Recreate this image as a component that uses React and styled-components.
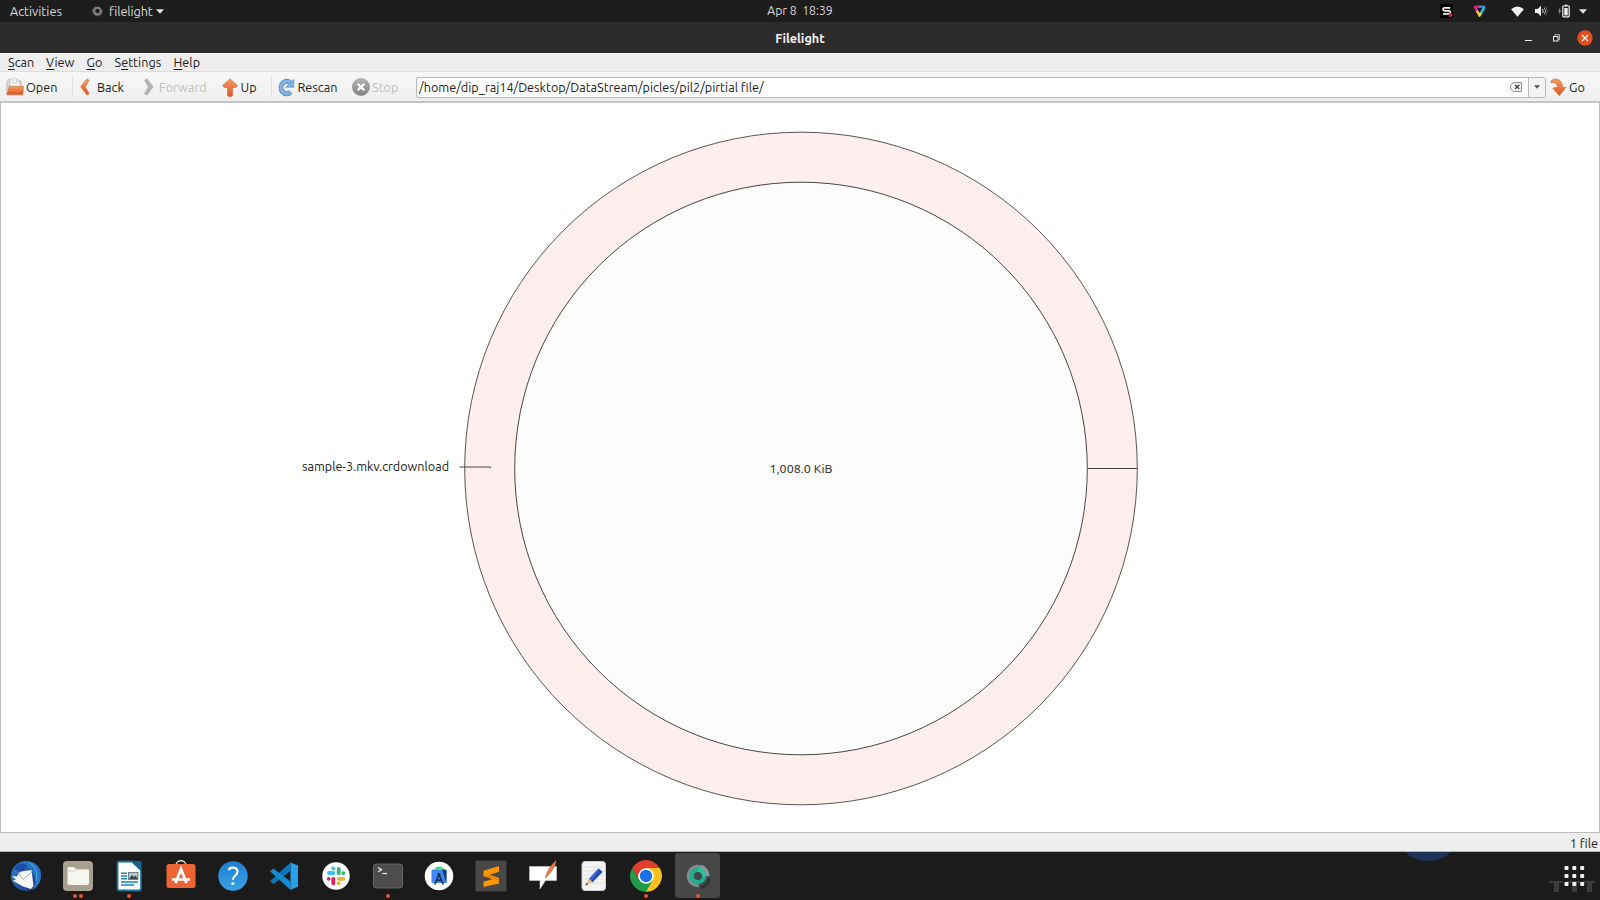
import React from "react";
import styled, { createGlobalStyle } from "styled-components";

const Global = createGlobalStyle`
  * { box-sizing: border-box; }
  body { margin: 0; background: #1b1b1b; overflow: hidden; }
  svg { display: block; flex: none; }
`;

const Desktop = styled.div`
  width: 1600px;
  height: 900px;
  display: flex;
  flex-direction: column;
  font-family: Ubuntu, "Noto Sans", sans-serif;
  font-size: 12.67px;
  color: #1c1c1c;
  white-space: pre;
`;

const Text = styled.span`
  font-size: ${(p) => p.$size || 12.67}px;
  letter-spacing: ${(p) => p.$ls || 0}px;
  line-height: 16px;
`;

/* GNOME top panel */
const Panel = styled.header`
  height: 22px;
  flex: none;
  display: grid;
  grid-template-columns: 1fr auto 1fr;
  align-items: center;
  background: #1d1d1d;
  color: #d9d9d9;
`;
const PanelLeft = styled.div`
  display: flex;
  align-items: center;
  padding-left: 10px;
`;
const Activities = styled.div`
  display: flex;
  width: 82px;
`;
const AppMenu = styled.div`
  display: flex;
  align-items: center;
`;
const AppName = styled.div`
  display: flex;
  width: 47px;
  margin-left: 6px;
`;
const Tray = styled.div`
  display: flex;
  justify-content: flex-end;
  align-items: center;
  padding-right: 13px;
`;
const TrayItem = styled.div`
  margin-left: ${(p) => p.$gap}px;
`;

/* window decoration */
const TitleBar = styled.div`
  height: 31px;
  flex: none;
  display: grid;
  grid-template-columns: 1fr auto 1fr;
  align-items: center;
  background: #2c2c2c;
  color: #f2f2f2;
  font-weight: 700;
`;
const WindowControls = styled.div`
  grid-column: 3;
  display: flex;
  justify-content: flex-end;
  align-items: center;
  padding-right: 7px;
`;
const Title = styled.div`
  grid-column: 2;
  display: flex;
`;
const ControlButton = styled.div`
  margin-left: ${(p) => p.$gap || 0}px;
`;

const MenuBar = styled.nav`
  height: 19px;
  flex: none;
  display: flex;
  align-items: center;
  padding: 0 0 1px 8px;
  background: #eeeeee;
  border-top: 1px solid #f8f8f8;
  border-bottom: 1px solid #dedede;
`;
const MenuItem = styled.div`
  display: flex;
  width: ${(p) => p.$w}px;
  u { text-decoration-thickness: 1px; text-underline-offset: 2px; }
`;

const ToolBar = styled.div`
  height: 31px;
  flex: none;
  display: flex;
  align-items: center;
  padding-top: 1px;
  background: linear-gradient(#f8f8f8, #eeeeee);
  border-bottom: 2px solid #c4c4c4;
`;
const ToolButton = styled.div`
  display: flex;
  align-items: center;
  flex: none;
  width: ${(p) => p.$w}px;
  padding-left: ${(p) => p.$pad}px;
  color: ${(p) => (p.$off ? "#c0c0c0" : "#1c1c1c")};
`;
const IconSlot = styled.div`
  width: ${(p) => p.$w}px;
  flex: none;
`;
const Separator = styled.div`
  width: 1px;
  height: 20px;
  background: #dfdfdf;
`;
const LocationBox = styled.div`
  flex: 1;
  height: 21px;
  display: flex;
  align-items: center;
  padding-left: 2px;
  background: #fff;
  border: 1px solid #b9b9b9;
  border-radius: 2px;
`;
const Path = styled.div`
  flex: 1;
  display: flex;
`;
const DropButton = styled.div`
  width: 17px;
  height: 19px;
  margin-left: 6px;
  display: flex;
  align-items: center;
  justify-content: center;
  background: #f3f3f3;
  border-left: 1px solid #b9b9b9;
`;

const MapArea = styled.main`
  flex: 1;
  min-height: 0;
  background: #fff;
  border: solid #bdbdbd;
  border-width: 0 1px 1px 1px;
  overflow: hidden;
`;

const StatusBar = styled.div`
  height: 18px;
  flex: none;
  display: flex;
  align-items: center;
  justify-content: flex-end;
  padding: 1px 2px 0 0;
  background: #eeeeee;
`;

const Dock = styled.footer`
  height: 49px;
  flex: none;
  display: flex;
  justify-content: space-between;
  border-top: 1px solid #aeb2b3;
  background: #1b1b1b;
`;
const DockApps = styled.div`
  display: flex;
  padding: 1px 0 0 3px;
  gap: 6.67px;
`;
const DockItem = styled.div`
  width: 45px;
  height: 45px;
  display: flex;
  flex-direction: column;
  align-items: center;
  padding: 7px 0 0 1px;
  border-radius: 3px;
  background: ${(p) => (p.$active ? "#474747" : "transparent")};
`;
const Dots = styled.div`
  display: flex;
  gap: 2px;
  margin-top: 2px;
`;
const Dot = styled.i`
  width: 4px;
  height: 4px;
  border-radius: 50%;
  background: #e9542a;
`;

const Caret = ({ w = 8, h = 5, fill = "#e4e4e4" }) => (
  <svg width={w} height={h} viewBox="0 0 8 5"><path d="M0 .3h8L4 4.8z" fill={fill} /></svg>
);

const Gradients = () => (
  <svg width="0" height="0" style={{ position: "absolute" }}>
    <defs>
      <linearGradient id="or" x1="0" y1="0" x2="0" y2="1"><stop offset="0" stopColor="#efa060" /><stop offset="1" stopColor="#df5424" /></linearGradient>
      <linearGradient id="gy" x1="0" y1="0" x2="0" y2="1"><stop offset="0" stopColor="#b5b5b5" /><stop offset="1" stopColor="#828282" /></linearGradient>
      <linearGradient id="bl" x1="0" y1="0" x2="1" y2="1"><stop offset="0" stopColor="#2b8ad8" /><stop offset="1" stopColor="#1c2f7c" /></linearGradient>
      <linearGradient id="hp" x1="0" y1="0" x2="0" y2="1"><stop offset="0" stopColor="#1d7fd0" /><stop offset="1" stopColor="#39a3e6" /></linearGradient>
    </defs>
  </svg>
);

const OpenIcon = () => (
  <svg width="18" height="18" viewBox="0 0 18 18">
    <path d="M.8 16V3.5L3 1.4h5l1 1.6h6V13z" fill="#d8d8d5" stroke="#aaa9a5" strokeWidth=".7" />
    <path d="M4 9V.9h6.5L14 3.4V9z" fill="#f8f8f8" stroke="#bbb" strokeWidth=".6" />
    <path d="M10.5 1v2.6H14M5.5 3h3M5.5 5h6" fill="none" stroke="#b5b5b5" strokeWidth=".6" />
    <path d="M3.5 8.2H17.6L16.8 16.8H.8z" fill="url(#or)" stroke="#d8622e" strokeWidth=".5" />
  </svg>
);
const Chevron = ({ right }) => (
  <svg width="10" height="18" viewBox="0 0 10 18">
    {right
      ? <path d="M.6 2.2 3 .9 9.2 8.8 3 17 .6 15.7 4.3 8.8z" fill="#b3b3b3" stroke="#9d9d9d" strokeWidth=".5" />
      : <path d="M9.2 2.2 6.9 .9.6 8.8 6.9 17 9.2 15.7 5.4 8.8z" fill="url(#or)" stroke="#d4622f" strokeWidth=".5" />}
  </svg>
);
const UpIcon = () => (
  <svg width="16" height="19" viewBox="0 0 16 19">
    <path d="M8 .7 15.4 7.6 14 9.4H10.6V17.5L9.6 18.4H6.4L5.5 17.5V9.4H2L.6 7.6z" fill="url(#or)" stroke="#d4683a" strokeWidth=".6" />
  </svg>
);
const RescanIcon = () => (
  <svg width="17" height="19" viewBox="0 0 17 19">
    <path d="M12.7 5.2A5.6 6.2 0 1 0 12.6 14" fill="none" stroke="#4a7fbd" strokeWidth="5" />
    <path d="M12.7 5.2A5.6 6.2 0 1 0 12.8 13.8" fill="none" stroke="#83b1e2" strokeWidth="3.8" />
    <path d="M15.8 1.4V9.2H7.6z" fill="#83b1e2" stroke="#4a7fbd" strokeWidth=".6" />
  </svg>
);
const StopIcon = () => (
  <svg width="18" height="18" viewBox="0 0 18 18">
    <circle cx="9" cy="9" r="8.6" fill="url(#gy)" stroke="#878787" strokeWidth=".5" />
    <path d="M5.7 5.7l6.6 6.6M12.3 5.7l-6.6 6.6" stroke="#fff" strokeWidth="2.3" />
  </svg>
);
const GoIcon = () => (
  <svg width="17" height="19" viewBox="0 0 17 19">
    <path d="M.8 3.1C4.5-.8 12.5.7 12.6 9.2H16L9.4 17.7 3 10.5 4 9.4H7.3C7.3 5.6 5 4.2 1.2 4.9z" fill="url(#or)" stroke="#cf6839" strokeWidth=".6" />
  </svg>
);
const ClearIcon = () => (
  <svg width="12" height="10" viewBox="0 0 12 10">
    <path d="M3.5.6H11.4V9.4H3.5L.6 6.5v-3z" fill="#fff" stroke="#777" strokeWidth=".9" />
    <path d="M5 2.8l4.300 4.300M9.300 2.800L5 7.100" stroke="#444" strokeWidth="1.4" />
  </svg>
);

const icons = {
  thunderbird: (
    <>
      <circle cx="16" cy="16" r="15" fill="url(#bl)" />
      <path d="M9 3C17-1 28 2 30.500 11c2 9-3 17-9 19 4-4 5-9 3-14C22 8 16 5 9 3z" fill="#2575c4" />
      <path d="M19 3c7 3 9 10 7 18" fill="none" stroke="#48a1e2" strokeWidth="1.2" />
      <path d="M4 9C7 3 13 2 17 6l-5 7z" fill="#1b4da9" />
      <path d="M11 11.500 21.500 10l2 16-2.500 3-8-2.500-10.500-6 3.500-.5-4-4 5 .5 1.500-3z" fill="#f6f6f7" />
      <path d="M8 12l5 7.500L22 12" fill="none" stroke="#9fa7b5" strokeWidth=".9" />
    </>
  ),
  files: (
    <>
      <rect x="1.500" y="1.500" width="29" height="29" rx="3" fill="#a79f8f" stroke="#c6bfb0" strokeWidth=".7" />
      <path d="M5.5 8.5Q5.5 7 7 7h5l2 2h11.500q1.500 0 1.500 1.500V23q0 2-2 2H7.500q-2 0-2-2z" fill="#f7f5f0" />
      <path d="M5.500 11h7l2-1.500h12.500" fill="none" stroke="#cfc9bc" strokeWidth=".8" />
    </>
  ),
  writer: (
    <>
      <path d="M4.500 3.500Q4.500 1.500 6.500 1.500H19L28 10v18.500q0 2-2 2H6.500q-2 0-2-2z" fill="#fff" stroke="#1a6f98" strokeWidth="1.800" />
      <path d="M19 1h8.500q1 0 1 1v8.500z" fill="#12608a" />
      <path d="M8 13.200h6M8 16h6M8 18.800h6M8 22h17M8 25h13" stroke="#1a83b8" strokeWidth="1.500" />
      <rect x="15.500" y="12.500" width="9.500" height="7" fill="#9bd0ec" stroke="#555" strokeWidth=".7" />
      <path d="M16 19l3-4 2 2 1.500-1.500L25 19z" fill="#444" /><circle cx="22.500" cy="14.500" r="1" fill="#f0c93d" />
    </>
  ),
  software: (
    <>
      <path d="M11 6C11-1 21-1 21 6" fill="none" stroke="#ddd3c6" strokeWidth="1.600" />
      <rect x="1.500" y="4" width="29" height="24" rx="2.500" fill="#ed6333" />
      <path d="M10.500 23 16 9l5.500 14" fill="none" stroke="#fff" strokeWidth="2.800" />
      <path d="M7 19.500h18" stroke="#fff" strokeWidth="2.500" />
    </>
  ),
  help: (
    <>
      <circle cx="16" cy="16" r="14.700" fill="url(#hp)" />
      <path d="M11.800 10.200C12.500 6.500 20.500 6.500 20.500 11.800c0 4-4.700 4-4.700 8" fill="none" stroke="#fff" strokeWidth="2.100" />
      <circle cx="15.800" cy="23.600" r="1.500" fill="#fff" />
    </>
  ),
  vscode: (
    <>
      <path d="M22.500 2.500 30 5.500v21l-7.500 3.500z" fill="#25a0ea" />
      <path d="M22.500 2.500V11L5.500 24 2 21.200z" fill="#0877bd" />
      <path d="M22.500 30V21.500L5.500 8.500 2 11.300z" fill="#168bd5" />
    </>
  ),
  slack: (
    <>
      <circle cx="16" cy="16" r="13.700" fill="#fff" />
      <g strokeWidth="3.800" strokeLinecap="round">
        <path d="M9 13h4.500" stroke="#36c5f0" /><path d="M13.300 8.500h.01" stroke="#36c5f0" />
        <path d="M18.700 8.800v4.400" stroke="#2eb67d" /><path d="M23.300 13.200h.01" stroke="#2eb67d" />
        <path d="M18.800 18.800h4.500" stroke="#ecb22e" /><path d="M18.700 23.400h.01" stroke="#ecb22e" />
        <path d="M13.300 18.800v4.500" stroke="#e01e5a" /><path d="M8.700 18.800h.01" stroke="#e01e5a" />
      </g>
    </>
  ),
  terminal: (
    <>
      <rect x="1.500" y="4" width="29" height="24" rx="2.500" fill="#4d4d4d" stroke="#666" />
      <path d="M6 7.500 9.500 9.700 6 11.800" fill="none" stroke="#eee" strokeWidth="1.300" />
      <path d="M10.500 13.500H15" stroke="#eee" strokeWidth="1.200" />
    </>
  ),
  studio: (
    <>
      <circle cx="16" cy="16" r="14.300" fill="#fff" />
      <path d="M11.500 9.500C12 5.500 20.500 5.500 21 9.500z" fill="#3ddc84" />
      <path d="M9.500 9.500H19l4.500 2v11.500H9.500q-1 0-1-1V10.500q0-1 1-1z" fill="#4285f4" />
      <path d="M19 9.500h3.500q1 0 1 1v12.500z" fill="#173c6e" />
      <path d="M11.800 24.500 16 14.500 20.200 24.500M13.500 19.500q2.500 1.700 5 0" fill="none" stroke="#12304f" strokeWidth="1.600" />
      <circle cx="16" cy="14.500" r="1.600" fill="#12304f" />
    </>
  ),
  sublime: (
    <>
      <rect x=".5" y=".5" width="31" height="31" rx="1.500" fill="#484848" />
      <path d="M8.500 10.800 24 6v5.800L14.500 14.800 24 18v5.500L8.500 27v-5.300l9-2.700-9-3z" fill="#ff9800" />
      <path d="M8.500 16 14.500 14.800 24 18v2l-6.500-1z" fill="#ee8900" />
    </>
  ),
  notes: (
    <>
      <path d="M2.500 6.500h27V20.500H18.500L13 29V20.500H2.500z" fill="#fff" stroke="#ddd" strokeWidth=".5" />
      <path d="M18.500 18C19 13 24 4.500 29 .500 30 5 23 13.500 18.500 18z" fill="#e57a43" stroke="#a34c28" strokeWidth=".5" />
    </>
  ),
  editor: (
    <>
      <rect x="4" y="1.500" width="23.500" height="29" rx="3" fill="#f4f4f4" stroke="#cfcfcf" />
      <path d="M6 7h20M6 11h20M6 15h20M6 19h20M6 23h20" stroke="#dedede" strokeWidth=".8" />
      <path d="M20.500 8.200 24.500 12 14.500 22.500 10.800 18.800z" fill="#3b67da" />
      <path d="M21.500 9.200l2.800 2.800-10 10-1-1z" fill="#284cac" />
      <path d="M10.800 18.800 14.500 22.500 7.500 25.500z" fill="#e9c27c" /><path d="M8.600 22.900 7.200 25.800 10 24.500z" fill="#333" />
    </>
  ),
  chrome: (
    <>
      <path d="M16 31.800A15.800 15.800 0 0 0 29.680 8H16v8z" fill="#fcc31e" />
      <path d="M2.320 8A15.800 15.800 0 0 1 29.680 8H16L9 12v8z" fill="#e33b2e" />
      <path d="M2.320 8 9.200 20 16 23.800 22.800 20 16 31.800A15.800 15.800 0 0 1 2.320 8z" fill="#229b48" />
      <circle cx="16" cy="16" r="7.800" fill="#fff" /><circle cx="16" cy="16" r="6.200" fill="#1a73e8" />
    </>
  ),
  filelight: (
    <>
      <path d="M19 27.500A11.500 11.500 0 0 0 27.500 18" fill="none" stroke="#2d3336" strokeWidth="2.500" />
      <circle cx="16" cy="16" r="9.500" fill="none" stroke="#7c8d91" strokeWidth="3.500" strokeDasharray="45 15" transform="rotate(85 16 16)" />
      <path d="M19 6.500A10 10 0 0 1 26 16" fill="none" stroke="#8d9b9e" strokeWidth="3" />
      <circle cx="16" cy="16" r="6.200" fill="none" stroke="#1bb18e" strokeWidth="4.200" />
      <path d="M16 9.800A6.200 6.200 0 0 1 22.200 16" fill="none" stroke="#2cc29d" strokeWidth="4.200" />
    </>
  ),
};

const dock = [
  ["thunderbird", 0], ["files", 2], ["writer", 1], ["software", 0], ["help", 0], ["vscode", 0], ["slack", 0],
  ["terminal", 1], ["studio", 0], ["sublime", 0], ["notes", 0], ["editor", 0], ["chrome", 1], ["filelight", 1],
];

const DiskMap = () => (
  <svg width="1598" height="730" viewBox="1 103 1598 730" fontFamily='Ubuntu, "Noto Sans", sans-serif' fill="#1c1c1c">
    <circle cx="801" cy="468.500" r="336.300" fill="#ffeeee" stroke="#444" strokeWidth=".9" />
    <circle cx="801" cy="468.500" r="286.300" fill="#fcfcfc" stroke="#333" strokeWidth=".9" />
    <path d="M1087.500 468.500H1137.500" stroke="#444" />
    <path d="M459.500 467H490.500V468" stroke="#333" fill="none" strokeWidth=".9" />
    <text x="302" y="471" fontSize="12.670" textLength="147" lengthAdjust="spacingAndGlyphs">sample-3.mkv.crdownload</text>
    <text x="769.500" y="473" fontSize="11.500" textLength="63" lengthAdjust="spacingAndGlyphs">1,008.0 KiB</text>
  </svg>
);

export default function App() {
  return (
    <Desktop>
      <Global />
      <Gradients />
      <Panel>
        <PanelLeft>
          <Activities><Text>Activities</Text></Activities>
          <AppMenu>
            <svg width="11" height="12" viewBox="0 0 11 12"><circle cx="5.500" cy="6" r="3.300" fill="none" stroke="#858585" strokeWidth="2" /><circle cx="5.500" cy="6" r="4.800" fill="none" stroke="#686868" strokeWidth="1" strokeDasharray="20 8" /></svg>
            <AppName><Text $ls={-0.1}>filelight</Text></AppName>
            <Caret />
          </AppMenu>
        </PanelLeft>
        <Text $size={12.2}>Apr 8  18:39</Text>
        <Tray>
          <TrayItem>
            <svg width="13" height="14" viewBox="0 0 13 14"><rect width="13" height="14" fill="#000" /><path d="M10.300 3.800H4.500Q3 3.800 3 5.200 3 6.800 4.500 6.800H9Q10.300 6.800 10.300 8.300T9 9.800H3" fill="none" stroke="#eee" strokeWidth="1.700" /><circle cx="10.500" cy="11" r="1.900" fill="#d8293a" /></svg>
          </TrayItem>
          <TrayItem $gap={20}>
            <svg width="13" height="12" viewBox="0 0 13 12"><path d="M6.500 9.500 2 2" stroke="#d92a83" strokeWidth="2.600" /><path d="M1 1.700H8" stroke="#d92a83" strokeWidth="2.200" /><path d="M6 1.700h6" stroke="#3e8ad3" strokeWidth="2.200" /><path d="M11.500 2 6.500 10.500" stroke="#38b5d8" strokeWidth="2.600" /><path d="M3.800 5.500 6.500 10.500 8 8" stroke="#f2d133" strokeWidth="2.400" fill="none" /><path d="M4 3.500H9L6.500 7.500z" fill="#161616" /></svg>
          </TrayItem>
          <TrayItem $gap={25}>
            <svg width="13" height="11" viewBox="0 0 13 11"><path d="M.1 3.200Q6.500-2.100 12.900 3.200L6.500 10.700z" fill="#f0f0f0" /></svg>
          </TrayItem>
          <TrayItem $gap={11}>
            <svg width="13" height="12" viewBox="0 0 13 12"><path d="M0 4h2.500L6 .8v10.400L2.500 8H0z" fill="#f0f0f0" /><path d="M7.500 4q1.500 2 0 4" fill="none" stroke="#ddd" /><path d="M9.300 2.500q2.500 3.500 0 7" fill="none" stroke="#aaa" /><path d="M11 1.300q2.500 4.700 0 9.400" fill="none" stroke="#666" strokeWidth=".8" /></svg>
          </TrayItem>
          <TrayItem $gap={10}>
            <svg width="12" height="14" viewBox="0 0 12 14"><path d="M2.500 3 0 7.700h1.500L1 11 3.200 6.500H1.800z" fill="#999" /><path d="M6.500 2V.7h3V2" fill="#eee" /><rect x="4.800" y="2" width="6.400" height="10.800" rx=".8" fill="none" stroke="#eee" strokeWidth="1.200" /><rect x="6.300" y="4" width="3.400" height="7.400" fill="#eee" /></svg>
          </TrayItem>
          <TrayItem $gap={9}><Caret /></TrayItem>
        </Tray>
      </Panel>
      <TitleBar>
        <Title><Text>Filelight</Text></Title>
        <WindowControls>
          <ControlButton><svg width="7" height="8" viewBox="0 0 7 8"><path d="M0 6.500h7" stroke="#eee" /></svg></ControlButton>
          <ControlButton $gap={21}><svg width="7" height="8" viewBox="0 0 7 8"><path d="M2 2V.500H6.500V5.500H5" fill="none" stroke="#aaa" /><rect x=".5" y="2.500" width="4.500" height="4.500" fill="none" stroke="#eee" /></svg></ControlButton>
          <ControlButton $gap={17}><svg width="16" height="16" viewBox="0 0 16 16"><circle cx="8" cy="8" r="7.700" fill="#e0501f" /><path d="M5 5l6 6M11 5l-6 6" stroke="#fff" strokeWidth="1.200" /></svg></ControlButton>
        </WindowControls>
      </TitleBar>
      <MenuBar>
        <MenuItem $w={38}><Text><u>S</u>can</Text></MenuItem>
        <MenuItem $w={40.500}><Text><u>V</u>iew</Text></MenuItem>
        <MenuItem $w={28}><Text><u>G</u>o</Text></MenuItem>
        <MenuItem $w={59}><Text>S<u>e</u>ttings</Text></MenuItem>
        <MenuItem $w={40}><Text><u>H</u>elp</Text></MenuItem>
      </MenuBar>
      <ToolBar>
        <ToolButton $w={72} $pad={6}><IconSlot $w={20}><OpenIcon /></IconSlot><Text>Open</Text></ToolButton>
        <Separator />
        <ToolButton $w={64} $pad={7}><IconSlot $w={17}><Chevron /></IconSlot><Text>Back</Text></ToolButton>
        <ToolButton $w={78} $pad={7} $off><IconSlot $w={15}><Chevron right /></IconSlot><Text>Forward</Text></ToolButton>
        <ToolButton $w={56} $pad={7}><IconSlot $w={18.500}><UpIcon /></IconSlot><Text>Up</Text></ToolButton>
        <Separator />
        <ToolButton $w={74} $pad={6}><IconSlot $w={19.500}><RescanIcon /></IconSlot><Text>Rescan</Text></ToolButton>
        <ToolButton $w={70} $pad={6} $off><IconSlot $w={20}><StopIcon /></IconSlot><Text>Stop</Text></ToolButton>
        <LocationBox>
          <Path><Text>/home/dip_raj14/Desktop/DataStream/picles/pil2/pirtial file/</Text></Path>
          <ClearIcon />
          <DropButton><Caret w={6} h={4} fill="#555" /></DropButton>
        </LocationBox>
        <ToolButton $w={54} $pad={4}><IconSlot $w={19}><GoIcon /></IconSlot><Text>Go</Text></ToolButton>
      </ToolBar>
      <MapArea><DiskMap /></MapArea>
      <StatusBar><Text>1 file</Text></StatusBar>
      <Dock>
        <DockApps>
          {dock.map(([name, dots]) => (
            <DockItem key={name} $active={name === "filelight"}>
              <svg width="32" height="32" viewBox="0 0 32 32">{icons[name]}</svg>
              <Dots>{Array.from({ length: dots }, (_, i) => <Dot key={i} />)}</Dots>
            </DockItem>
          ))}
        </DockApps>
        <svg width="220" height="48" viewBox="1380 852 220 48">
          <ellipse cx="1428" cy="845" rx="25" ry="16" fill="#1d3159" />
          <g fill="#3c3c3c"><path d="M1549 881h14v2h-4v9h-5v-9h-5zM1567 881h14v2h-4v9h-5v-9h-5zM1583 881h12v2h-3v9h-5v-9h-4z" /></g>
          {[868, 876, 884].map((y) => [1566.500, 1574.300, 1582.200].map((x) => (
            <rect key={x + "-" + y} x={x - 2} y={y - 2} width="4" height="4" rx="1" fill="#f2f2f2" />
          )))}
        </svg>
      </Dock>
    </Desktop>
  );
}
